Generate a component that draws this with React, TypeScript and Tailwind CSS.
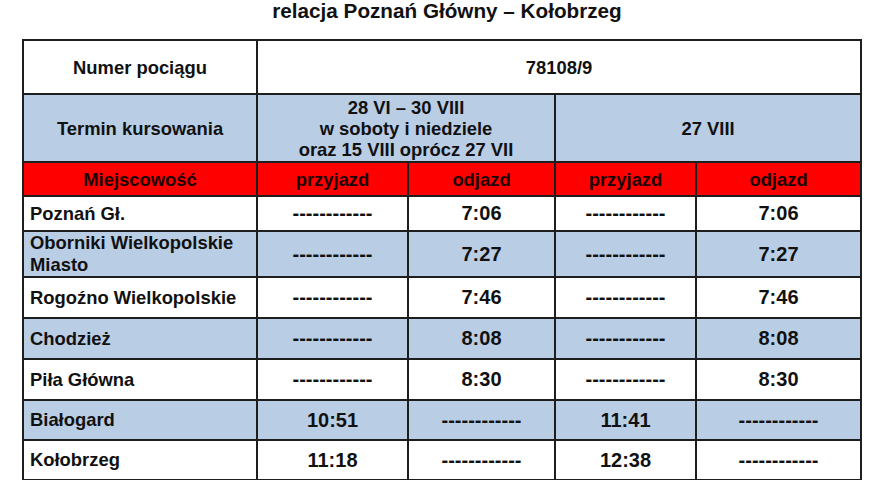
const cell = "border-2 border-[#1e1e1e] text-center align-middle";
const blue = "bg-[#b9cde5]";

type Row = { name: string; a1: string; d1: string; a2: string; d2: string; h: string };

const DASH = "------------";

const rows: Row[] = [
  { name: "Poznań Gł.", a1: DASH, d1: "7:06", a2: DASH, d2: "7:06", h: "h-[35px]" },
  { name: "Oborniki Wielkopolskie Miasto", a1: DASH, d1: "7:27", a2: DASH, d2: "7:27", h: "h-[45px]" },
  { name: "Rogoźno Wielkopolskie", a1: DASH, d1: "7:46", a2: DASH, d2: "7:46", h: "h-[41px]" },
  { name: "Chodzież", a1: DASH, d1: "8:08", a2: DASH, d2: "8:08", h: "h-[41px]" },
  { name: "Piła Główna", a1: DASH, d1: "8:30", a2: DASH, d2: "8:30", h: "h-[41px]" },
  { name: "Białogard", a1: "10:51", d1: DASH, a2: "11:41", d2: DASH, h: "h-[40px]" },
  { name: "Kołobrzeg", a1: "11:18", d1: DASH, a2: "12:38", d2: DASH, h: "h-[40px]" },
];

function Time({ v }: { v: string }) {
  return <span className="text-[20px] leading-none">{v}</span>;
}

export default function App() {
  return (
    <div
      className="w-[880px] h-[480px] overflow-hidden bg-white text-[#111] font-bold"
      style={{ fontFamily: '"Liberation Sans", Arial, sans-serif' }}
    >
      <h1 className="h-[39px] pl-[14px] text-center text-[20.7px] leading-[22px]">
        relacja Poznań Główny – Kołobrzeg
      </h1>
      <table className="ml-[22px] w-[838px] table-fixed border-collapse text-[18.4px] leading-[21px]">
        <colgroup>
          <col className="w-[234px]" />
          <col className="w-[151px]" />
          <col className="w-[147px]" />
          <col className="w-[141px]" />
          <col className="w-[165px]" />
        </colgroup>
        <tbody>
          <tr className="h-[54px]">
            <td className={cell}>Numer pociągu</td>
            <td className={cell} colSpan={4}>
              78108/9
            </td>
          </tr>
          <tr className={`h-[68px] ${blue}`}>
            <td className={cell}>Termin kursowania</td>
            <td className={cell} colSpan={2}>
              28 VI – 30 VIII
              <br />w soboty i niedziele
              <br />
              oraz 15 VIII oprócz 27 VII
            </td>
            <td className={cell} colSpan={2}>
              27 VIII
            </td>
          </tr>
          <tr className="h-[34px] bg-[#ff0000] text-[#1a0404]">
            <td className={cell}>Miejscowość</td>
            <td className={cell}>przyjazd</td>
            <td className={cell}>odjazd</td>
            <td className={cell}>przyjazd</td>
            <td className={cell}>odjazd</td>
          </tr>
          {rows.map((r, i) => (
            <tr key={r.name} className={`${r.h} ${i % 2 === 1 ? blue : "bg-white"}`}>
              <td className={`${cell} !text-left pl-[6px] pr-1 leading-[22px]`}>{r.name}</td>
              <td className={cell}>
                <Time v={r.a1} />
              </td>
              <td className={cell}>
                <Time v={r.d1} />
              </td>
              <td className={cell}>
                <Time v={r.a2} />
              </td>
              <td className={cell}>
                <Time v={r.d2} />
              </td>
            </tr>
          ))}
        </tbody>
      </table>
    </div>
  );
}
